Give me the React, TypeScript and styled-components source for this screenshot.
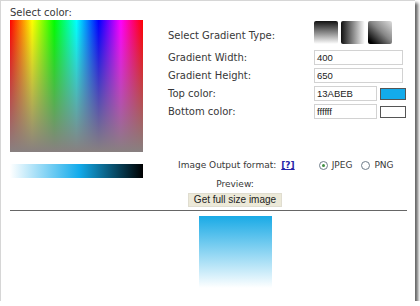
import React from "react"
import styled, { createGlobalStyle } from "styled-components"

const GlobalStyle = createGlobalStyle`
  html, body {
    margin: 0;
    padding: 0;
    background: #fff;
  }
  body {
    font-family: "DejaVu Sans", Verdana, sans-serif;
    font-size: 10px;
    color: #383838;
  }
`

const Frame = styled.div`
  box-sizing: border-box;
  width: 415px;
  height: 301px;
  border-top: 1px solid #d6d6d6;
  border-left: 1px solid #d6d6d6;
  box-shadow: 3px 3px 3px rgba(0, 0, 0, 0.6);
  background: #fff;
  display: flex;
  flex-direction: column;
`

const Top = styled.div`
  display: flex;
`

const Picker = styled.div`
  box-sizing: border-box;
  width: 167px;
  padding: 6px 0 0 9px;
`

const Caption = styled.div`
  line-height: 12px;
  margin-bottom: 1px;
`

const Spectrum = styled.div`
  width: 133px;
  height: 132px;
  /* hue across, fading into grey towards the bottom */
  background: linear-gradient(to bottom, rgba(136, 128, 128, 0), #888080 100%),
    linear-gradient(to right, #f00, #ff0, #0f0, #0ff, #00f, #f0f, #f00);
`

const ShadeBar = styled.div`
  width: 133px;
  height: 14px;
  margin-top: 12px;
  background: linear-gradient(to right, #fff, #13abeb 52%, #000);
`

const Settings = styled.div`
  display: flex;
  flex-direction: column;
  padding-top: 20px;
  width: 245px;
`

const TypeRow = styled.div`
  display: flex;
  align-items: flex-start;
`

const Label = styled.div`
  width: 146px;
  line-height: 12px;
  white-space: nowrap;
`

const TypeLabel = styled(Label)`
  margin-top: 9px;
`

const TypeIcons = styled.div`
  display: flex;
  gap: 3px;
`

const TypeIcon = styled.div<{ $fill: string }>`
  width: 24px;
  height: 23px;
  border-radius: 2px;
  background: ${props => props.$fill};
`

const Fields = styled.div`
  display: flex;
  flex-direction: column;
  gap: 3px;
  margin-top: 6px;
`

const Field = styled.div`
  display: flex;
  align-items: center;
  height: 15px;
`

const Input = styled.div<{ $w: number }>`
  box-sizing: border-box;
  width: ${props => props.$w}px;
  height: 15px;
  border: 1px solid #d2d2d2;
  padding-left: 2px;
  font-family: "Liberation Sans", Arial, sans-serif;
  font-size: 9.5px;
  line-height: 13px;
  color: #222;
`

const Swatch = styled.div<{ $color: string }>`
  box-sizing: border-box;
  width: 26px;
  height: 12px;
  margin-left: 3px;
  border: 1px solid #555;
  background: ${props => props.$color};
`

const OutputRow = styled.div`
  display: flex;
  align-items: center;
  height: 12px;
  margin-top: 40px;
  padding-left: 10px;
  font-size: 9px;
  white-space: nowrap;
`

const HelpLink = styled.a`
  margin-left: 5px;
  color: #2424a8;
  font-weight: bold;
  text-decoration: underline;
`

const Radios = styled.div`
  display: flex;
  align-items: center;
  margin-left: 24px;
`

const Radio = styled.span<{ $checked?: boolean }>`
  box-sizing: border-box;
  display: inline-flex;
  align-items: center;
  justify-content: center;
  width: 9px;
  height: 9px;
  border-radius: 50%;
  border: 1px solid #6f7d8a;
  background: #fff;
  margin-right: 4px;

  &::after {
    content: "";
    width: 3px;
    height: 3px;
    border-radius: 50%;
    background: ${props => (props.$checked ? "#3f8f3f" : "transparent")};
  }
`

const RadioText = styled.span`
  line-height: 12px;
  margin-right: 9px;
`

const PreviewBlock = styled.div`
  width: 134px;
  margin-top: 7px;
  display: flex;
  flex-direction: column;
  align-items: center;
`

const PreviewTitle = styled.div`
  line-height: 12px;
  font-size: 9px;
`

const Button = styled.button`
  box-sizing: border-box;
  width: 94px;
  height: 14px;
  margin-top: 3px;
  padding: 0;
  border: 1px solid #e0ddd0;
  background: #ece9d8;
  font-family: "Liberation Sans", Arial, sans-serif;
  font-size: 10px;
  line-height: 12px;
  color: #222;
`

const Divider = styled.div`
  width: 397px;
  margin: 3px 0 0 9px;
  border-top: 1px solid #666;
`

const PreviewImage = styled.div`
  width: 73px;
  height: 72px;
  margin: 5px 0 0 198px;
  background: linear-gradient(to bottom, #19aae6, #fff);
`

const gradientTypes = [
  "linear-gradient(to bottom, #111, #fff)",
  "linear-gradient(to right, #111, #fff)",
  "linear-gradient(to top right, #000 10%, #888 55%, #ddd)",
]

const App = () => {
  return (
    <>
      <GlobalStyle />
      <Frame>
        <Top>
          <Picker>
            <Caption>Select color:</Caption>
            <Spectrum />
            <ShadeBar />
          </Picker>
          <Settings>
            <TypeRow>
              <TypeLabel>Select Gradient Type:</TypeLabel>
              <TypeIcons>
                {gradientTypes.map(fill => (
                  <TypeIcon key={fill} $fill={fill} />
                ))}
              </TypeIcons>
            </TypeRow>
            <Fields>
              <Field>
                <Label>Gradient Width:</Label>
                <Input $w={89}>400</Input>
              </Field>
              <Field>
                <Label>Gradient Height:</Label>
                <Input $w={89}>650</Input>
              </Field>
              <Field>
                <Label>Top color:</Label>
                <Input $w={63}>13ABEB</Input>
                <Swatch $color="#13abeb" />
              </Field>
              <Field>
                <Label>Bottom color:</Label>
                <Input $w={63}>ffffff</Input>
                <Swatch $color="#fff" />
              </Field>
            </Fields>
            <OutputRow>
              Image Output format:
              <HelpLink>[?]</HelpLink>
              <Radios>
                <Radio $checked />
                <RadioText>JPEG</RadioText>
                <Radio />
                <RadioText>PNG</RadioText>
              </Radios>
            </OutputRow>
            <PreviewBlock>
              <PreviewTitle>Preview:</PreviewTitle>
              <Button>Get full size image</Button>
            </PreviewBlock>
          </Settings>
        </Top>
        <Divider />
        <PreviewImage />
      </Frame>
    </>
  )
}

export default App
